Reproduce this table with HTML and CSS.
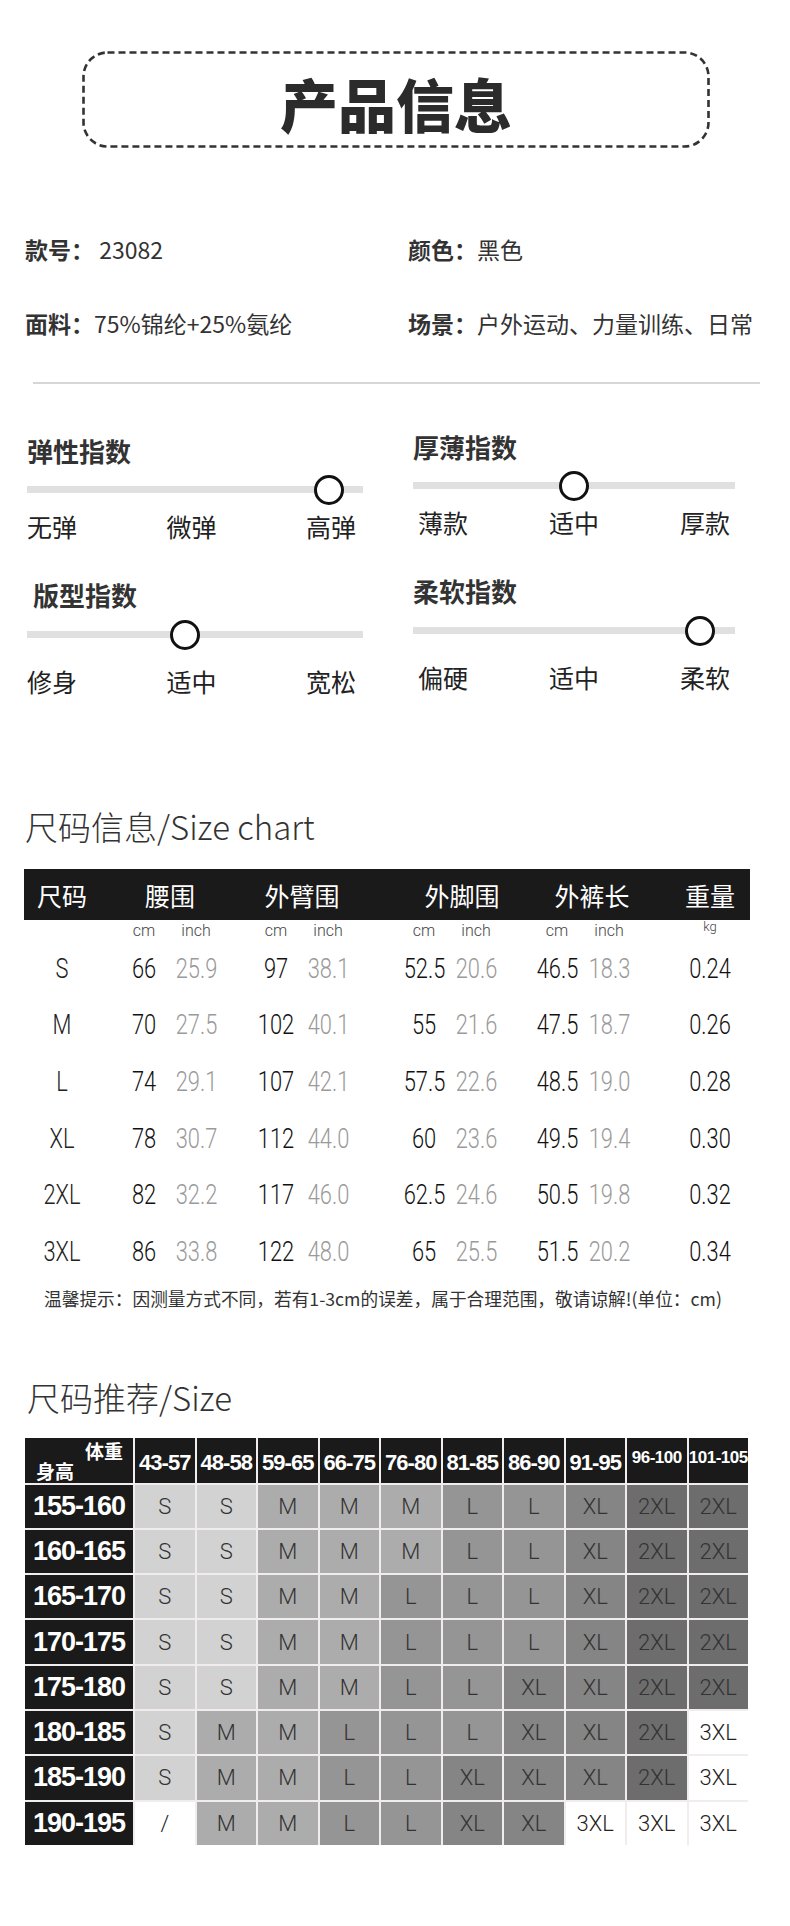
FILE: index.html
```html
<!DOCTYPE html>
<html lang="zh-CN">
<head>
<meta charset="utf-8">
<title>产品信息</title>
<link rel="stylesheet" href="styles.css">
</head>
<body>
<div class="page">
  <header class="title-box">
    <svg class="title-frame" width="628" height="97" viewBox="0 0 628 97"><rect x="1.5" y="1.5" width="625" height="94" rx="24" ry="24" fill="none" stroke="#333" stroke-width="2.6" stroke-dasharray="7 4"/></svg>
    <h1>产品信息</h1>
  </header>

  <section class="info">
    <div><b>款号：</b> 23082</div>
    <div><b>颜色：</b>黑色</div>
    <div><b>面料：</b>75%锦纶+25%氨纶</div>
    <div><b>场景：</b>户外运动、力量训练、日常</div>
  </section>

  <hr class="divider">

  <section class="indices">
    <div class="gauge gauge-left">
      <h3>弹性指数</h3>
      <div class="track"><span class="knob" style="left:90%"></span></div>
      <div class="ticks"><span>无弹</span><span>微弹</span><span>高弹</span></div>
    </div>
    <div class="gauge gauge-right">
      <h3>厚薄指数</h3>
      <div class="track"><span class="knob" style="left:50%"></span></div>
      <div class="ticks"><span>薄款</span><span>适中</span><span>厚款</span></div>
    </div>
    <div class="gauge gauge-left gauge-low">
      <h3 class="indent">版型指数</h3>
      <div class="track"><span class="knob" style="left:47%"></span></div>
      <div class="ticks"><span>修身</span><span>适中</span><span>宽松</span></div>
    </div>
    <div class="gauge gauge-right gauge-low">
      <h3>柔软指数</h3>
      <div class="track"><span class="knob" style="left:89%"></span></div>
      <div class="ticks"><span>偏硬</span><span>适中</span><span>柔软</span></div>
    </div>
  </section>

  <h2 class="sec-title">尺码信息/Size chart</h2>

  <div class="sc-head">
    <span class="c-size">尺码</span>
    <span class="c-pair g1">腰围</span>
    <span class="c-pair g2">外臂围</span>
    <span class="c-pair g3 shift-a">外脚围</span>
    <span class="c-pair g4 shift-b">外裤长</span>
    <span class="c-kg">重量</span>
  </div>

  <div class="sc-units">
    <span class="c-size"></span>
    <span class="c-pair g1"><span>cm</span><span>inch</span></span>
    <span class="c-pair g2"><span>cm</span><span>inch</span></span>
    <span class="c-pair g3"><span>cm</span><span>inch</span></span>
    <span class="c-pair g4"><span>cm</span><span>inch</span></span>
    <span class="c-kg kg">kg</span>
  </div>

  <div class="sc-row">
    <span class="c-size">S</span>
    <span class="c-pair g1"><span class="cm">66</span><span class="in">25.9</span></span>
    <span class="c-pair g2"><span class="cm">97</span><span class="in">38.1</span></span>
    <span class="c-pair g3"><span class="cm">52.5</span><span class="in">20.6</span></span>
    <span class="c-pair g4"><span class="cm">46.5</span><span class="in">18.3</span></span>
    <span class="c-kg">0.24</span>
  </div>
  <div class="sc-row">
    <span class="c-size">M</span>
    <span class="c-pair g1"><span class="cm">70</span><span class="in">27.5</span></span>
    <span class="c-pair g2"><span class="cm">102</span><span class="in">40.1</span></span>
    <span class="c-pair g3"><span class="cm">55</span><span class="in">21.6</span></span>
    <span class="c-pair g4"><span class="cm">47.5</span><span class="in">18.7</span></span>
    <span class="c-kg">0.26</span>
  </div>
  <div class="sc-row">
    <span class="c-size">L</span>
    <span class="c-pair g1"><span class="cm">74</span><span class="in">29.1</span></span>
    <span class="c-pair g2"><span class="cm">107</span><span class="in">42.1</span></span>
    <span class="c-pair g3"><span class="cm">57.5</span><span class="in">22.6</span></span>
    <span class="c-pair g4"><span class="cm">48.5</span><span class="in">19.0</span></span>
    <span class="c-kg">0.28</span>
  </div>
  <div class="sc-row">
    <span class="c-size">XL</span>
    <span class="c-pair g1"><span class="cm">78</span><span class="in">30.7</span></span>
    <span class="c-pair g2"><span class="cm">112</span><span class="in">44.0</span></span>
    <span class="c-pair g3"><span class="cm">60</span><span class="in">23.6</span></span>
    <span class="c-pair g4"><span class="cm">49.5</span><span class="in">19.4</span></span>
    <span class="c-kg">0.30</span>
  </div>
  <div class="sc-row">
    <span class="c-size">2XL</span>
    <span class="c-pair g1"><span class="cm">82</span><span class="in">32.2</span></span>
    <span class="c-pair g2"><span class="cm">117</span><span class="in">46.0</span></span>
    <span class="c-pair g3"><span class="cm">62.5</span><span class="in">24.6</span></span>
    <span class="c-pair g4"><span class="cm">50.5</span><span class="in">19.8</span></span>
    <span class="c-kg">0.32</span>
  </div>
  <div class="sc-row">
    <span class="c-size">3XL</span>
    <span class="c-pair g1"><span class="cm">86</span><span class="in">33.8</span></span>
    <span class="c-pair g2"><span class="cm">122</span><span class="in">48.0</span></span>
    <span class="c-pair g3"><span class="cm">65</span><span class="in">25.5</span></span>
    <span class="c-pair g4"><span class="cm">51.5</span><span class="in">20.2</span></span>
    <span class="c-kg">0.34</span>
  </div>

  <p class="sc-note">温馨提示：因测量方式不同，若有1-3cm的误差，属于合理范围，敬请谅解!(单位：cm)</p>

  <h2 class="sec-title rec-title">尺码推荐/Size</h2>

  <div class="rec">
    <div class="rec-corner"><span class="rc-w">体重</span><span class="rc-h">身高</span></div>
    <div class="rh">43-57</div><div class="rh">48-58</div><div class="rh">59-65</div><div class="rh">66-75</div><div class="rh">76-80</div>
    <div class="rh">81-85</div><div class="rh">86-90</div><div class="rh">91-95</div><div class="rh small">96-100</div><div class="rh small">101-105</div>

    <div class="rk">155-160</div>
    <div class="c s">S</div><div class="c s">S</div><div class="c m">M</div><div class="c m">M</div><div class="c m">M</div><div class="c l">L</div><div class="c l">L</div><div class="c xl">XL</div><div class="c x2">2XL</div><div class="c x2">2XL</div>

    <div class="rk">160-165</div>
    <div class="c s">S</div><div class="c s">S</div><div class="c m">M</div><div class="c m">M</div><div class="c m">M</div><div class="c l">L</div><div class="c l">L</div><div class="c xl">XL</div><div class="c x2">2XL</div><div class="c x2">2XL</div>

    <div class="rk">165-170</div>
    <div class="c s">S</div><div class="c s">S</div><div class="c m">M</div><div class="c m">M</div><div class="c l">L</div><div class="c l">L</div><div class="c l">L</div><div class="c xl">XL</div><div class="c x2">2XL</div><div class="c x2">2XL</div>

    <div class="rk">170-175</div>
    <div class="c s">S</div><div class="c s">S</div><div class="c m">M</div><div class="c m">M</div><div class="c l">L</div><div class="c l">L</div><div class="c l">L</div><div class="c xl">XL</div><div class="c x2">2XL</div><div class="c x2">2XL</div>

    <div class="rk">175-180</div>
    <div class="c s">S</div><div class="c s">S</div><div class="c m">M</div><div class="c m">M</div><div class="c l">L</div><div class="c l">L</div><div class="c xl">XL</div><div class="c xl">XL</div><div class="c x2">2XL</div><div class="c x2">2XL</div>

    <div class="rk">180-185</div>
    <div class="c s">S</div><div class="c m">M</div><div class="c m">M</div><div class="c l">L</div><div class="c l">L</div><div class="c l">L</div><div class="c xl">XL</div><div class="c xl">XL</div><div class="c x2">2XL</div><div class="c x3">3XL</div>

    <div class="rk">185-190</div>
    <div class="c s">S</div><div class="c m">M</div><div class="c m">M</div><div class="c l">L</div><div class="c l">L</div><div class="c xl">XL</div><div class="c xl">XL</div><div class="c xl">XL</div><div class="c x2">2XL</div><div class="c x3">3XL</div>

    <div class="rk">190-195</div>
    <div class="c x3">/</div><div class="c m">M</div><div class="c m">M</div><div class="c l">L</div><div class="c l">L</div><div class="c xl">XL</div><div class="c xl">XL</div><div class="c x3">3XL</div><div class="c x3">3XL</div><div class="c x3">3XL</div>
  </div>
</div>
</body>
</html>
```

FILE: styles.css
```css
* { box-sizing: border-box; }

body {
  margin: 0;
  background: #fff;
  font-family: "Noto Sans CJK SC", "Noto Sans", sans-serif;
  color: #333;
}

.page {
  width: 790px;
  height: 1926px;
  overflow: hidden;
}

/* ---------- title ---------- */
.title-box {
  position: relative;
  width: 628px;
  height: 97px;
  margin: 51px 0 0 82px;
  padding-top: 6px;
  display: flex;
  align-items: center;
  justify-content: center;
}
.title-frame {
  position: absolute;
  left: 0;
  top: 0;
}
.title-box h1 {
  margin: 0;
  font-size: 58px;
  line-height: 1;
  font-weight: 900;
  color: #2b2b2b;
}

/* ---------- info ---------- */
.info {
  display: grid;
  grid-template-columns: 383px 1fr;
  row-gap: 42px;
  margin-top: 85px;
  padding-left: 25px;
  font-size: 23px;
  line-height: 32px;
  color: #333;
}
.info b { font-weight: 700; }

.divider {
  margin: 43px 0 0 33px;
  width: 727px;
  height: 2px;
  border: 0;
  background: #d6d6d6;
}

/* ---------- gauges ---------- */
.indices {
  display: grid;
  grid-template-columns: 336px 322px;
  column-gap: 50px;
  row-gap: 39px;
  margin-top: 52px;
  padding-left: 27px;
}
.gauge h3 {
  margin: 0;
  font-size: 26px;
  line-height: 30px;
  font-weight: 700;
  color: #333;
}
.gauge h3.indent { padding-left: 6px; }
.gauge-right h3 { margin-top: -4px; margin-bottom: 4px; }
.track {
  position: relative;
  height: 7px;
  margin-top: 20px;
  background: #e0e0e0;
}
.gauge-low .track { margin-top: 21px; }
.knob {
  position: absolute;
  top: 50%;
  width: 30px;
  height: 30px;
  border: 3.5px solid #111;
  border-radius: 50%;
  background: #fff;
  transform: translate(-50%, -50%);
}
.ticks {
  display: flex;
  justify-content: space-between;
  margin-top: 18px;
  font-size: 25px;
  line-height: 30px;
  color: #222;
}
.gauge-low .ticks { margin-top: 28px; }
.gauge-left .ticks { padding-right: 7px; }
.gauge-right .ticks { padding: 0 5px 0 5px; }

/* ---------- section titles ---------- */
.sec-title {
  margin: 110px 0 0 25px;
  font-size: 33px;
  line-height: 40px;
  font-weight: 300;
  color: #333;
}
.rec-title {
  margin: 67px 0 0 27px;
}

/* ---------- size chart ---------- */
.sc-head,
.sc-units,
.sc-row {
  display: flex;
  align-items: center;
  margin-left: 24px;
}
.sc-head {
  margin-top: 23px;
  width: 726px;
  height: 51px;
  background: #1a1a1a;
  color: #fff;
  font-size: 25px;
  line-height: 30px;
}
.c-size { width: 76px; flex: none; text-align: center; }
.c-pair { width: 104px; flex: none; text-align: center; }
.c-kg { width: 60px; flex: none; text-align: center; }
.g1 { margin-left: 18px; }
.g2 { margin-left: 28px; }
.g3 { margin-left: 44px; }
.g4 { margin-left: 29px; }
.c-kg { margin-left: 45px; }
.shift-a { padding-left: 24px; }
.shift-b { padding-left: 18px; }

.sc-units {
  height: 20px;
  font-family: Roboto, "Noto Sans", sans-serif;
  font-weight: 300;
  font-size: 16px;
  color: #444;
}
.sc-units .c-pair,
.sc-row .c-pair { display: flex; }
.sc-units .c-pair > span,
.sc-row .c-pair > span {
  width: 52px;
  text-align: center;
}
.sc-units .kg {
  font-size: 13px;
  align-self: flex-start;
  line-height: 14px;
}

.sc-row {
  height: 56.6px;
  font-family: Roboto, "Noto Sans", sans-serif;
  font-weight: 300;
  font-size: 28px;
  color: #111;
}
.sc-row .c-size,
.sc-row .c-kg,
.sc-row .cm,
.sc-row .in {
  transform: scaleX(0.78);
}
.sc-row .c-size { color: #222; }
.sc-row .in { color: #9a9a9a; }

.sc-note {
  margin: 6px 0 0 44px;
  font-size: 17.7px;
  line-height: 24px;
  color: #333;
  white-space: nowrap;
}

/* ---------- recommendation table ---------- */
.rec {
  display: grid;
  grid-template-columns: 108px repeat(10, 1fr);
  grid-template-rows: 45px repeat(8, 43.3px);
  gap: 2px;
  width: 723px;
  margin: 21px 0 0 25px;
  background: #f1edef;
}
.rec-corner {
  display: flex;
  flex-direction: column;
  justify-content: space-between;
  padding: 3px 10px 2px 11px;
  background: #1a1a1a;
  color: #fff;
  font-size: 19px;
  line-height: 20px;
  font-weight: 700;
}
.rc-w { align-self: flex-end; }
.rc-h { align-self: flex-start; }
.rh {
  display: flex;
  align-items: center;
  justify-content: center;
  background: #1a1a1a;
  color: #fff;
  font-family: "Liberation Sans", Arial, sans-serif;
  font-weight: 700;
  font-size: 22px;
  letter-spacing: -1px;
  padding-top: 6px;
}
.rh.small {
  font-size: 17px;
  letter-spacing: -0.5px;
  padding-top: 0;
  padding-bottom: 4px;
}
.rk {
  display: flex;
  align-items: center;
  justify-content: center;
  background: #1a1a1a;
  color: #fff;
  font-family: "Liberation Sans", Arial, sans-serif;
  font-weight: 700;
  font-size: 27px;
  letter-spacing: -1px;
}
.c {
  display: flex;
  align-items: center;
  justify-content: center;
  font-family: Roboto, "Noto Sans", sans-serif;
  font-weight: 300;
  font-size: 22px;
  color: #333;
}
.s { background: #d2d2d2; }
.m { background: #acacac; }
.l { background: #959595; }
.xl { background: #858585; }
.x2 { background: #6d6d6d; }
.x3 { background: #fff; color: #222; }
```
